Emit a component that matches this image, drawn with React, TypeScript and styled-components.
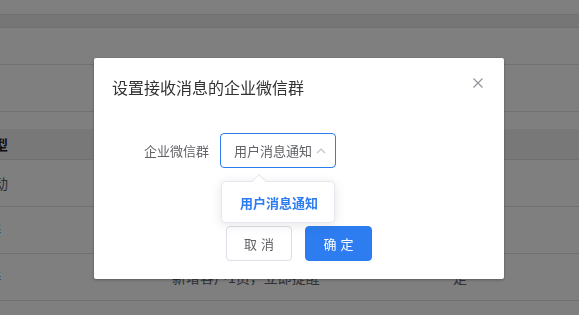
import React from 'react';
import styled, { createGlobalStyle } from 'styled-components';

const GlobalStyle = createGlobalStyle`
  html, body {
    margin: 0;
    padding: 0;
    background: #ffffff;
    font-family: "Noto Sans CJK SC", "Noto Sans", sans-serif;
  }
  * {
    box-sizing: border-box;
  }
`;

const Page = styled.div`
  width: 579px;
  height: 315px;
  overflow: hidden;
  background: #ffffff;
`;

const Band = styled.div<{ h: number; bg?: string }>`
  height: ${(p) => p.h}px;
  background: ${(p) => p.bg || '#ffffff'};
  border-bottom: 1px solid #dfe1e6;
`;

const Spacer = styled.div<{ h: number }>`
  height: ${(p) => p.h}px;
`;

const Row = styled.div<{ head?: boolean }>`
  display: flex;
  align-items: center;
  height: ${(p) => (p.head ? 31 : 47)}px;
  background: ${(p) => (p.head ? '#f0f1f3' : '#ffffff')};
  border-bottom: 1px solid #dfe1e6;
  font-size: 14px;
  font-weight: ${(p) => (p.head ? 600 : 400)};
  color: ${(p) => (p.head ? '#1f2329' : '#606266')};
`;

const Cell = styled.div<{ w: number; end?: boolean; link?: boolean }>`
  width: ${(p) => p.w}px;
  flex-shrink: 0;
  display: flex;
  justify-content: ${(p) => (p.end ? 'flex-end' : 'flex-start')};
  white-space: nowrap;
  color: ${(p) => (p.link ? '#2d7cf0' : 'inherit')};
`;

const Overlay = styled.div`
  position: fixed;
  inset: 0;
  background: rgba(0, 0, 0, 0.5);
  padding: 58px 0 0 94px;
`;

const Modal = styled.div`
  width: 410px;
  height: 221px;
  background: #ffffff;
  border-radius: 2px;
  box-shadow: 0 1px 3px rgba(0, 0, 0, 0.3);
  display: flex;
  flex-direction: column;
`;

const Header = styled.div`
  display: flex;
  justify-content: space-between;
  align-items: flex-start;
  padding: 17px 18px 0 18px;
  height: 58px;
`;

const Title = styled.div`
  font-size: 16px;
  line-height: 24px;
  color: #303133;
`;

const Close = styled.button`
  border: 0;
  background: none;
  padding: 0;
  margin-top: 0;
  width: 16px;
  height: 16px;
  display: flex;
  align-items: center;
  justify-content: center;
  cursor: pointer;
`;

const FormRow = styled.div`
  display: flex;
  align-items: center;
  padding-top: 17px;
  height: 52px;
`;

const Label = styled.div`
  width: 126px;
  padding-right: 11px;
  text-align: right;
  font-size: 13px;
  color: #606266;
`;

const SelectWrap = styled.div`
  position: relative;
`;

const SelectBox = styled.div`
  width: 116px;
  height: 35px;
  border: 1px solid #2d7cf0;
  border-radius: 4px;
  display: flex;
  align-items: center;
  padding: 0 8px 0 13px;
  gap: 4px;
`;

const SelectText = styled.div`
  flex: 1;
  font-size: 13px;
  color: #606266;
  white-space: nowrap;
  overflow: hidden;
`;

const Popper = styled.div`
  position: absolute;
  left: 1px;
  top: 48px;
  width: 114px;
  height: 42px;
  background: #ffffff;
  border: 1px solid #e4e7ed;
  border-radius: 4px;
  box-shadow: 0 2px 12px rgba(0, 0, 0, 0.1);
  display: flex;
  align-items: center;
  padding-left: 18px;
  z-index: 2;
`;

const PopperArrow = styled.div`
  position: absolute;
  top: -6px;
  left: 32px;
  width: 10px;
  height: 10px;
  background: #ffffff;
  border-left: 1px solid #e4e7ed;
  border-top: 1px solid #e4e7ed;
  transform: rotate(45deg);
`;

const Option = styled.div`
  font-size: 13px;
  font-weight: 700;
  color: #2d7cf0;
  white-space: nowrap;
`;

const Footer = styled.div`
  display: flex;
  justify-content: center;
  gap: 13px;
  padding-top: 58px;
`;

const Button = styled.button<{ primary?: boolean }>`
  width: ${(p) => (p.primary ? 67 : 66)}px;
  height: 35px;
  border-radius: 4px;
  border: 1px solid ${(p) => (p.primary ? '#2d7cf0' : '#dcdfe6')};
  background: ${(p) => (p.primary ? '#2d7cf0' : '#ffffff')};
  color: ${(p) => (p.primary ? '#ffffff' : '#606266')};
  font-family: inherit;
  font-size: 13px;
  letter-spacing: 4px;
  padding: 0 0 0 4px;
  cursor: pointer;
`;

export default function App() {
  return (
    <>
      <GlobalStyle />
      <Page>
        <Spacer h={14} />
        <Band h={14} bg="#ececee" style={{ borderTop: '1px solid #dfe1e6' }} />
        <Band h={37} />
        <Band h={47} />
        <Spacer h={17} />
        <Row head>
          <Cell w={8} end>类型</Cell>
        </Row>
        <Row>
          <Cell w={8} end>活动</Cell>
        </Row>
        <Row>
          <Cell w={1} end link>链接</Cell>
        </Row>
        <Row>
          <Cell w={1} end link>链接</Cell>
          <Cell w={452}>
            <span style={{ marginLeft: 171 }}>新增客户1员，立即提醒</span>
          </Cell>
          <Cell w={20}>是</Cell>
        </Row>
      </Page>
      <Overlay>
        <Modal>
          <Header>
            <Title>设置接收消息的企业微信群</Title>
            <Close aria-label="close">
              <svg width="10" height="10" viewBox="0 0 10 10">
                <path d="M0.5 0.5L9.5 9.5M9.5 0.5L0.5 9.5" stroke="#909399" strokeWidth="1.1" fill="none" />
              </svg>
            </Close>
          </Header>
          <FormRow>
            <Label>企业微信群</Label>
            <SelectWrap>
              <SelectBox>
                <SelectText>用户消息通知</SelectText>
                <svg width="12" height="12" viewBox="0 0 12 12">
                  <path d="M2 8L6 4L10 8" stroke="#c0c4cc" strokeWidth="1.2" fill="none" />
                </svg>
              </SelectBox>
              <Popper>
                <PopperArrow />
                <Option>用户消息通知</Option>
              </Popper>
            </SelectWrap>
          </FormRow>
          <Footer>
            <Button>取消</Button>
            <Button primary>确定</Button>
          </Footer>
        </Modal>
      </Overlay>
    </>
  );
}
